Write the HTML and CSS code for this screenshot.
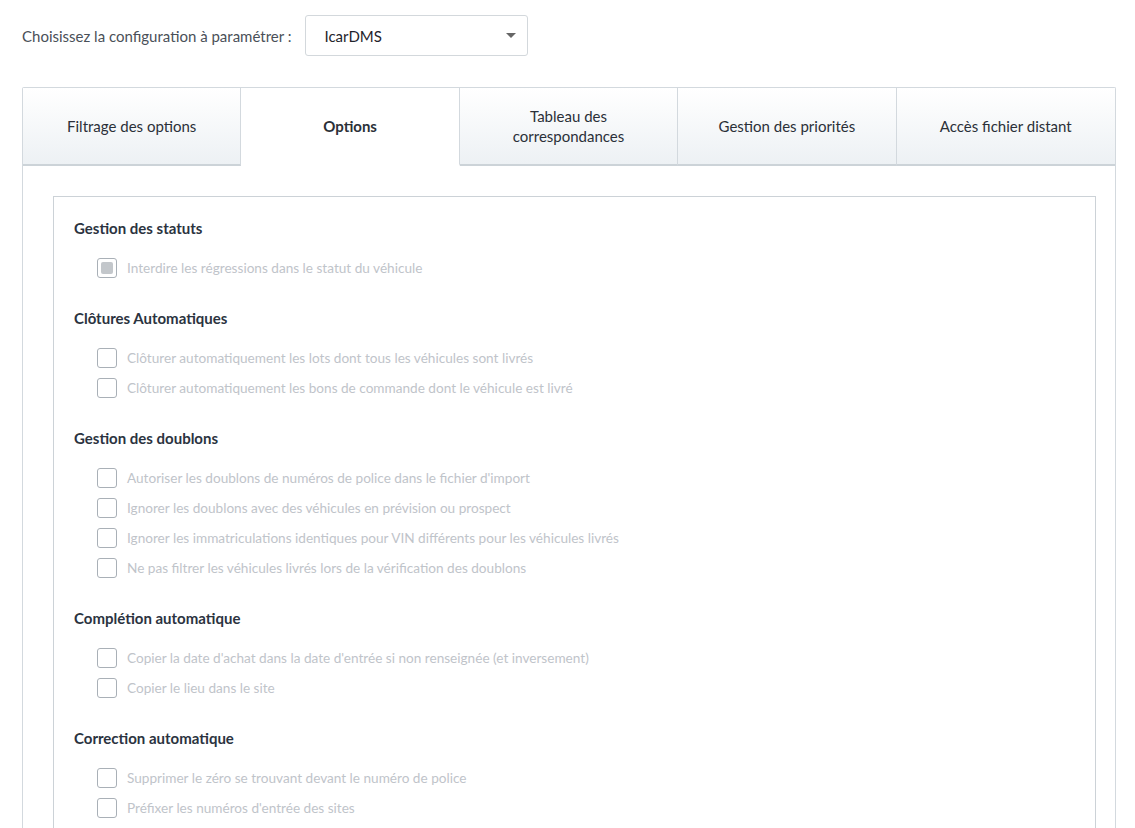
FILE: index.html
```html
<!DOCTYPE html>
<html lang="fr">
    <head>
        <meta charset="UTF-8" />
        <meta name="viewport" content="width=device-width, initial-scale=1.0" />
        <link rel="stylesheet" href="styles.css">
    </head>
    <body>
        <div class="page">
            <div class="config-row">
                <label class="config-label">Choisissez la configuration à paramétrer :</label>
                <div class="select">
                    <span>IcarDMS</span>
                    <span class="caret"></span>
                </div>
            </div>

            <div class="tabs">
                <div class="tab">Filtrage des options</div>
                <div class="tab active">Options</div>
                <div class="tab">Tableau des<br>correspondances</div>
                <div class="tab">Gestion des priorités</div>
                <div class="tab last">Accès fichier distant</div>
            </div>

            <div class="panel">
                <div class="box">
                    <div class="group">
                        <h3>Gestion des statuts</h3>
                        <div class="option"><span class="check checked"></span>Interdire les régressions dans le statut du véhicule</div>
                    </div>
                    <div class="group">
                        <h3>Clôtures Automatiques</h3>
                        <div class="option"><span class="check"></span>Clôturer automatiquement les lots dont tous les véhicules sont livrés</div>
                        <div class="option"><span class="check"></span>Clôturer automatiquement les bons de commande dont le véhicule est livré</div>
                    </div>
                    <div class="group">
                        <h3>Gestion des doublons</h3>
                        <div class="option"><span class="check"></span>Autoriser les doublons de numéros de police dans le fichier d'import</div>
                        <div class="option"><span class="check"></span>Ignorer les doublons avec des véhicules en prévision ou prospect</div>
                        <div class="option"><span class="check"></span>Ignorer les immatriculations identiques pour VIN différents pour les véhicules livrés</div>
                        <div class="option"><span class="check"></span>Ne pas filtrer les véhicules livrés lors de la vérification des doublons</div>
                    </div>
                    <div class="group">
                        <h3>Complétion automatique</h3>
                        <div class="option"><span class="check"></span>Copier la date d'achat dans la date d'entrée si non renseignée (et inversement)</div>
                        <div class="option"><span class="check"></span>Copier le lieu dans le site</div>
                    </div>
                    <div class="group">
                        <h3>Correction automatique</h3>
                        <div class="option"><span class="check"></span>Supprimer le zéro se trouvant devant le numéro de police</div>
                        <div class="option"><span class="check"></span>Préfixer les numéros d'entrée des sites</div>
                    </div>
                </div>
            </div>
        </div>
    </body>
</html>
```

FILE: styles.css
```css
html,
body {
    margin: 0;
    background: #fff;
    font-family: Lato, "Open Sans", sans-serif;
    color: #2b3038;
}
.page {
    padding: 15px 19px 0 22px;
}
.config-row {
    display: flex;
    align-items: center;
    gap: 14px;
    height: 41px;
}
.config-label {
    font-size: 15px;
    color: #4a5058;
}
.select {
    width: 223px;
    height: 41px;
    box-sizing: border-box;
    border: 1px solid #d3d8dc;
    border-radius: 3px;
    display: flex;
    align-items: center;
    justify-content: space-between;
    padding: 0 11px 0 18px;
    font-size: 15px;
    color: #1f242b;
}
.caret {
    width: 0;
    height: 0;
    border-left: 5px solid transparent;
    border-right: 5px solid transparent;
    border-top: 5px solid #666;
}
.tabs {
    margin-top: 31px;
    display: grid;
    grid-template-columns: repeat(5, 1fr);
    border: 1px solid #d3d9de;
    border-bottom: none;
    border-radius: 2px 2px 0 0;
}
.tab {
    height: 76px;
    display: flex;
    align-items: center;
    justify-content: center;
    text-align: center;
    font-size: 15px;
    line-height: 20px;
    background: linear-gradient(#fff, #edf1f4);
    border-right: 1px solid #d3d9de;
    border-bottom: 2px solid #ccd3d8;
}
.tab.last {
    border-right: none;
}
.tab.active {
    background: #fff;
    font-weight: bold;
    border-bottom-color: #fff;
}
.panel {
    border-left: 1px solid #d3d9de;
    border-right: 1px solid #d3d9de;
    padding: 30px 19px 0 30px;
}
.box {
    border: 1px solid #ccd2d7;
    border-bottom: none;
    padding: 20px 20px 30px;
}
.group {
    margin-bottom: 24px;
}
.group h3 {
    margin: 0 0 13px;
    font-size: 15px;
    line-height: 23px;
    font-weight: bold;
    color: #2b3340;
}
.option {
    display: flex;
    align-items: center;
    gap: 10px;
    height: 30px;
    padding-left: 23px;
    font-size: 13.6px;
    color: #bfc4ca;
}
.check {
    width: 18px;
    height: 18px;
    border: 1px solid #a9b0b7;
    border-radius: 3px;
    box-sizing: content-box;
    position: relative;
    flex: none;
}
.check.checked::after {
    content: "";
    position: absolute;
    left: 3px;
    top: 3px;
    width: 12px;
    height: 12px;
    border-radius: 2px;
    background: #c3c7cb;
}
```
